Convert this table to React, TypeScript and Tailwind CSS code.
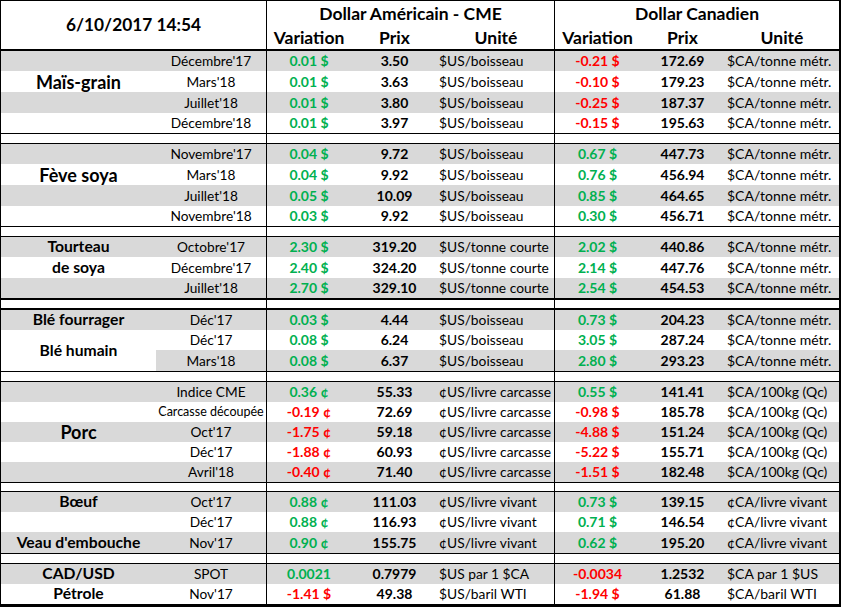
import React from "react";

type C = "g" | "r";
type Row = {
  m: string;
  ms?: boolean;
  uv: string;
  uc: C;
  up: string;
  uu: string;
  cv: string;
  cc: C;
  cp: string;
  cu: string;
};
type Label = { text: string; big?: boolean; span?: boolean };
type Group = { heights: string; rows: Row[]; labels: (Label | null | "skip")[] };

const COLS = "grid grid-cols-[155px_110px_85px_87px_116px_86px_85px_114px]";

const groups: Group[] = [
  {
    heights: "grid-rows-[20px_21px_21px_20px]",
    labels: [null, { text: "Maïs-grain", big: true }, null, null],
    rows: [
      { m: "Décembre'17", uv: "0.01 $", uc: "g", up: "3.50", uu: "$US/boisseau", cv: "-0.21 $", cc: "r", cp: "172.69", cu: "$CA/tonne métr." },
      { m: "Mars'18", uv: "0.01 $", uc: "g", up: "3.63", uu: "$US/boisseau", cv: "-0.10 $", cc: "r", cp: "179.23", cu: "$CA/tonne métr." },
      { m: "Juillet'18", uv: "0.01 $", uc: "g", up: "3.80", uu: "$US/boisseau", cv: "-0.25 $", cc: "r", cp: "187.37", cu: "$CA/tonne métr." },
      { m: "Décembre'18", uv: "0.01 $", uc: "g", up: "3.97", uu: "$US/boisseau", cv: "-0.15 $", cc: "r", cp: "195.63", cu: "$CA/tonne métr." },
    ],
  },
  {
    heights: "grid-rows-[20px_21px_21px_20px]",
    labels: [null, { text: "Fève soya", big: true }, null, null],
    rows: [
      { m: "Novembre'17", uv: "0.04 $", uc: "g", up: "9.72", uu: "$US/boisseau", cv: "0.67 $", cc: "g", cp: "447.73", cu: "$CA/tonne métr." },
      { m: "Mars'18", uv: "0.04 $", uc: "g", up: "9.92", uu: "$US/boisseau", cv: "0.76 $", cc: "g", cp: "456.94", cu: "$CA/tonne métr." },
      { m: "Juillet'18", uv: "0.05 $", uc: "g", up: "10.09", uu: "$US/boisseau", cv: "0.85 $", cc: "g", cp: "464.65", cu: "$CA/tonne métr." },
      { m: "Novembre'18", uv: "0.03 $", uc: "g", up: "9.92", uu: "$US/boisseau", cv: "0.30 $", cc: "g", cp: "456.71", cu: "$CA/tonne métr." },
    ],
  },
  {
    heights: "grid-rows-[20px_21px_20px]",
    labels: [{ text: "Tourteau" }, { text: "de soya" }, null],
    rows: [
      { m: "Octobre'17", uv: "2.30 $", uc: "g", up: "319.20", uu: "$US/tonne courte", cv: "2.02 $", cc: "g", cp: "440.86", cu: "$CA/tonne métr." },
      { m: "Décembre'17", uv: "2.40 $", uc: "g", up: "324.20", uu: "$US/tonne courte", cv: "2.14 $", cc: "g", cp: "447.76", cu: "$CA/tonne métr." },
      { m: "Juillet'18", uv: "2.70 $", uc: "g", up: "329.10", uu: "$US/tonne courte", cv: "2.54 $", cc: "g", cp: "454.53", cu: "$CA/tonne métr." },
    ],
  },
  {
    heights: "grid-rows-[20px_20px_21px]",
    labels: [{ text: "Blé fourrager" }, { text: "Blé humain", span: true }, "skip"],
    rows: [
      { m: "Déc'17", uv: "0.03 $", uc: "g", up: "4.44", uu: "$US/boisseau", cv: "0.73 $", cc: "g", cp: "204.23", cu: "$CA/tonne métr." },
      { m: "Déc'17", uv: "0.08 $", uc: "g", up: "6.24", uu: "$US/boisseau", cv: "3.05 $", cc: "g", cp: "287.24", cu: "$CA/tonne métr." },
      { m: "Mars'18", uv: "0.08 $", uc: "g", up: "6.37", uu: "$US/boisseau", cv: "2.80 $", cc: "g", cp: "293.23", cu: "$CA/tonne métr." },
    ],
  },
  {
    heights: "grid-rows-[20px_20px_20px_20px_20px]",
    labels: [null, null, { text: "Porc", big: true }, null, null],
    rows: [
      { m: "Indice CME", uv: "0.36 ¢", uc: "g", up: "55.33", uu: "¢US/livre carcasse", cv: "0.55 $", cc: "g", cp: "141.41", cu: "$CA/100kg (Qc)" },
      { m: "Carcasse découpée", ms: true, uv: "-0.19 ¢", uc: "r", up: "72.69", uu: "¢US/livre carcasse", cv: "-0.98 $", cc: "r", cp: "185.78", cu: "$CA/100kg (Qc)" },
      { m: "Oct'17", uv: "-1.75 ¢", uc: "r", up: "59.18", uu: "¢US/livre carcasse", cv: "-4.88 $", cc: "r", cp: "151.24", cu: "$CA/100kg (Qc)" },
      { m: "Déc'17", uv: "-1.88 ¢", uc: "r", up: "60.93", uu: "¢US/livre carcasse", cv: "-5.22 $", cc: "r", cp: "155.71", cu: "$CA/100kg (Qc)" },
      { m: "Avril'18", uv: "-0.40 ¢", uc: "r", up: "71.40", uu: "¢US/livre carcasse", cv: "-1.51 $", cc: "r", cp: "182.48", cu: "$CA/100kg (Qc)" },
    ],
  },
  {
    heights: "grid-rows-[20px_20px_21px]",
    labels: [{ text: "Bœuf" }, null, { text: "Veau d'embouche" }],
    rows: [
      { m: "Oct'17", uv: "0.88 ¢", uc: "g", up: "111.03", uu: "¢US/livre vivant", cv: "0.73 $", cc: "g", cp: "139.15", cu: "¢CA/livre vivant" },
      { m: "Déc'17", uv: "0.88 ¢", uc: "g", up: "116.93", uu: "¢US/livre vivant", cv: "0.71 $", cc: "g", cp: "146.54", cu: "¢CA/livre vivant" },
      { m: "Nov'17", uv: "0.90 ¢", uc: "g", up: "155.75", uu: "¢US/livre vivant", cv: "0.62 $", cc: "g", cp: "195.20", cu: "¢CA/livre vivant" },
    ],
  },
  {
    heights: "grid-rows-[20px_20px]",
    labels: [{ text: "CAD/USD" }, { text: "Pétrole" }],
    rows: [
      { m: "SPOT", uv: "0.0021", uc: "g", up: "0.7979", uu: "$US par 1 $CA", cv: "-0.0034", cc: "r", cp: "1.2532", cu: "$CA par 1 $US" },
      { m: "Nov'17", uv: "-1.41 $", uc: "r", up: "49.38", uu: "$US/baril WTI", cv: "-1.94 $", cc: "r", cp: "61.88", cu: "$CA/baril WTI" },
    ],
  },
];

const seps = [
  "h-[11px] border-y border-black",
  "h-[11px] border-y border-black",
  "h-[12px] border-y-2 border-black",
  "h-[11px] border-y border-black",
  "h-[10px] border-y border-black",
  "h-[11px] border-y border-black",
];

function col(c: C) {
  return c === "g" ? "text-[#00B050]" : "text-[#FF0000]";
}

function GroupView({ g }: { g: Group }) {
  const cells: React.ReactNode[] = [];
  g.rows.forEach((r, i) => {
    const bg = i % 2 === 0 ? "bg-[#D9D9D9]" : "bg-white";
    const lab = g.labels[i];
    if (lab !== "skip") {
      if (lab && lab.span) {
        cells.push(
          <div key={`n${i}`} className="row-span-2 bg-white flex items-center justify-center font-bold text-[15.7px] text-black">
            {lab.text}
          </div>
        );
      } else {
        cells.push(
          <div
            key={`n${i}`}
            className={`${bg} flex items-center justify-center font-bold text-black whitespace-nowrap ${lab && lab.big ? "text-[18px]" : "text-[15.7px]"}`}
          >
            {lab ? lab.text : ""}
          </div>
        );
      }
    }
    cells.push(
      <div key={`m${i}`} className={`${bg} flex items-center justify-center whitespace-nowrap ${r.ms ? "text-[12.5px]" : "text-[13.7px]"}`}>
        {r.m}
      </div>
    );
    cells.push(
      <div key={`uv${i}`} className={`${bg} border-l border-black flex items-center justify-center font-bold text-[14px] ${col(r.uc)}`}>
        {r.uv}
      </div>
    );
    cells.push(
      <div key={`up${i}`} className={`${bg} flex items-center justify-center font-bold text-[14px]`}>
        {r.up}
      </div>
    );
    cells.push(
      <div key={`uu${i}`} className={`${bg} flex items-center justify-start pl-[1px] text-[13.8px] whitespace-nowrap`}>
        {r.uu}
      </div>
    );
    cells.push(
      <div key={`cv${i}`} className={`${bg} border-l border-black flex items-center justify-center font-bold text-[14px] ${col(r.cc)}`}>
        {r.cv}
      </div>
    );
    cells.push(
      <div key={`cp${i}`} className={`${bg} flex items-center justify-center font-bold text-[14px]`}>
        {r.cp}
      </div>
    );
    cells.push(
      <div key={`cu${i}`} className={`${bg} flex items-center justify-start pl-[2px] text-[14px] whitespace-nowrap`}>
        {r.cu}
      </div>
    );
  });
  return <div className={`${COLS} ${g.heights} leading-none`}>{cells}</div>;
}

function Sep({ cls }: { cls: string }) {
  return (
    <div className={`${COLS} ${cls}`}>
      <div className="col-span-2" />
      <div className="col-span-3 border-l border-black" />
      <div className="col-span-3 border-l border-black" />
    </div>
  );
}

export default function App() {
  return (
    <div className="w-[843px] h-[608px] bg-white font-['Lato',sans-serif] text-black">
      <div className="w-[841px] border-l border-t border-r-2 border-b-[3px] border-black">
        <div className={`${COLS} h-[50px] border-b-2 border-black`}>
          <div className="col-span-2 flex items-center justify-center font-bold text-[17.3px]">6/10/2017 14:54</div>
          <div className="col-span-3 border-l border-black flex flex-col">
            <div className="h-[26px] flex items-center justify-center font-bold text-[17.5px]">Dollar Américain - CME</div>
            <div className="flex-1 grid grid-cols-[84px_87px_116px] font-bold text-[17.5px] leading-none">
              <div className="flex items-center justify-center">Variation</div>
              <div className="flex items-center justify-center">Prix</div>
              <div className="flex items-center justify-center">Unité</div>
            </div>
          </div>
          <div className="col-span-3 border-l border-black flex flex-col">
            <div className="h-[26px] flex items-center justify-center font-bold text-[17.5px]">Dollar Canadien</div>
            <div className="flex-1 grid grid-cols-[85px_85px_114px] font-bold text-[17.5px] leading-none">
              <div className="flex items-center justify-center">Variation</div>
              <div className="flex items-center justify-center">Prix</div>
              <div className="flex items-center justify-center">Unité</div>
            </div>
          </div>
        </div>
        {groups.map((g, i) => (
          <React.Fragment key={i}>
            <GroupView g={g} />
            {i < seps.length && <Sep cls={seps[i]} />}
          </React.Fragment>
        ))}
      </div>
    </div>
  );
}
